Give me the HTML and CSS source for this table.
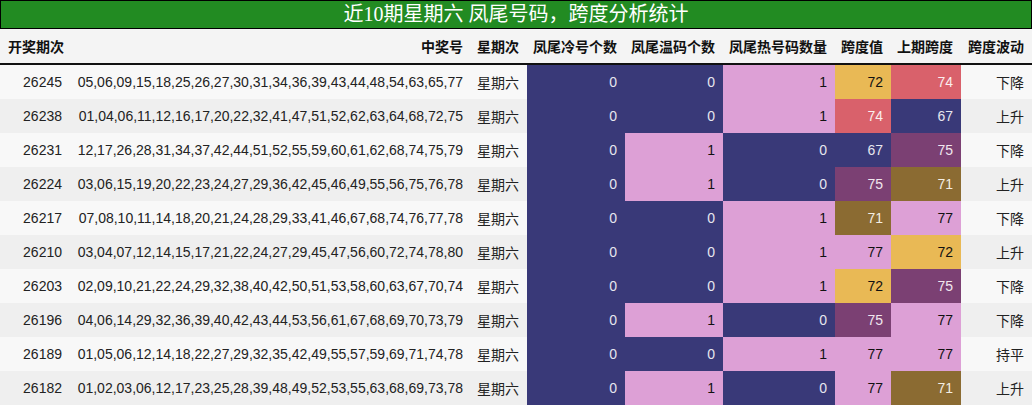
FILE: index.html
```html
<!DOCTYPE html>
<html lang="zh">
<head>
<meta charset="utf-8">
<link rel="stylesheet" href="styles.css">
</head>
<body>
<div class="title">近10期星期六 凤尾号码，跨度分析统计</div>
<table class="stats">
<colgroup>
<col class="c1"><col class="c2"><col class="c3"><col class="c4"><col class="c5"><col class="c6"><col class="c7"><col class="c8"><col class="c9">
</colgroup>
<thead>
<tr><th class="l">开奖期次</th><th>中奖号</th><th>星期次</th><th>凤尾冷号个数</th><th>凤尾温码个数</th><th>凤尾热号码数量</th><th>跨度值</th><th>上期跨度</th><th>跨度波动</th></tr>
</thead>
<tbody>
<tr><td>26245</td><td>05,06,09,15,18,25,26,27,30,31,34,36,39,43,44,48,54,63,65,77</td><td>星期六</td><td class="n">0</td><td class="n">0</td><td class="p">1</td><td class="y">72</td><td class="r">74</td><td>下降</td></tr>
<tr><td>26238</td><td>01,04,06,11,12,16,17,20,22,32,41,47,51,52,62,63,64,68,72,75</td><td>星期六</td><td class="n">0</td><td class="n">0</td><td class="p">1</td><td class="r">74</td><td class="n">67</td><td>上升</td></tr>
<tr><td>26231</td><td>12,17,26,28,31,34,37,42,44,51,52,55,59,60,61,62,68,74,75,79</td><td>星期六</td><td class="n">0</td><td class="p">1</td><td class="n">0</td><td class="n">67</td><td class="v">75</td><td>下降</td></tr>
<tr><td>26224</td><td>03,06,15,19,20,22,23,24,27,29,36,42,45,46,49,55,56,75,76,78</td><td>星期六</td><td class="n">0</td><td class="p">1</td><td class="n">0</td><td class="v">75</td><td class="b">71</td><td>上升</td></tr>
<tr><td>26217</td><td>07,08,10,11,14,18,20,21,24,28,29,33,41,46,67,68,74,76,77,78</td><td>星期六</td><td class="n">0</td><td class="n">0</td><td class="p">1</td><td class="b">71</td><td class="p">77</td><td>下降</td></tr>
<tr><td>26210</td><td>03,04,07,12,14,15,17,21,22,24,27,29,45,47,56,60,72,74,78,80</td><td>星期六</td><td class="n">0</td><td class="n">0</td><td class="p">1</td><td class="p">77</td><td class="y">72</td><td>上升</td></tr>
<tr><td>26203</td><td>02,09,10,21,22,24,29,32,38,40,42,50,51,53,58,60,63,67,70,74</td><td>星期六</td><td class="n">0</td><td class="n">0</td><td class="p">1</td><td class="y">72</td><td class="v">75</td><td>下降</td></tr>
<tr><td>26196</td><td>04,06,14,29,32,36,39,40,42,43,44,53,56,61,67,68,69,70,73,79</td><td>星期六</td><td class="n">0</td><td class="p">1</td><td class="n">0</td><td class="v">75</td><td class="p">77</td><td>下降</td></tr>
<tr><td>26189</td><td>01,05,06,12,14,18,22,27,29,32,35,42,49,55,57,59,69,71,74,78</td><td>星期六</td><td class="n">0</td><td class="n">0</td><td class="p">1</td><td class="p">77</td><td class="p">77</td><td>持平</td></tr>
<tr><td>26182</td><td>01,02,03,06,12,17,23,25,28,39,48,49,52,53,55,63,68,69,73,78</td><td>星期六</td><td class="n">0</td><td class="p">1</td><td class="n">0</td><td class="p">77</td><td class="b">71</td><td>上升</td></tr>
</tbody>
</table>
</body>
</html>
```

FILE: styles.css
```css
html, body {
  margin: 0;
  padding: 0;
  background: #ffffff;
}
body {
  width: 1032px;
  font-family: "Liberation Sans", "Noto Sans CJK SC", sans-serif;
}
.title {
  box-sizing: border-box;
  height: 29px;
  background: #228b22;
  border: 1px solid #000;
  color: #fff;
  font-family: "Liberation Serif", "Noto Sans CJK SC", serif;
  font-size: 20px;
  line-height: 26px;
  text-align: center;
}
.stats {
  width: 1032px;
  border-collapse: collapse;
  table-layout: fixed;
  font-size: 14px;
  color: #222;
}
.c1 { width: 70px; }
.c2 { width: 401px; }
.c3 { width: 56px; }
.c4 { width: 98px; }
.c5 { width: 98px; }
.c6 { width: 112px; }
.c7 { width: 56px; }
.c8 { width: 70px; }
.c9 { width: 71px; }
.stats th {
  height: 34px;
  padding: 0 8px 0 0;
  background: #f4f4f4;
  border-bottom: 2px solid #111;
  text-align: right;
  font-weight: bold;
  color: #111;
  white-space: nowrap;
}
.stats th.l {
  text-align: left;
  padding-left: 8px;
}
.stats td {
  height: 34px;
  padding: 0 8px 0 0;
  text-align: right;
  white-space: nowrap;
  color: #222;
}
.stats tbody tr:nth-child(odd) { background: #f8f8f8; }
.stats tbody tr:nth-child(even) { background: #efefef; }
.stats td.n { background: #393978; color: #e6e6ee; }
.stats td.p { background: #dda0d6; color: #111; }
.stats td.y { background: #e9b955; color: #111; }
.stats td.r { background: #d9616b; color: #fbeeee; }
.stats td.v { background: #7b4073; color: #f0e6ee; }
.stats td.b { background: #8b6b32; color: #f3eee4; }
```
